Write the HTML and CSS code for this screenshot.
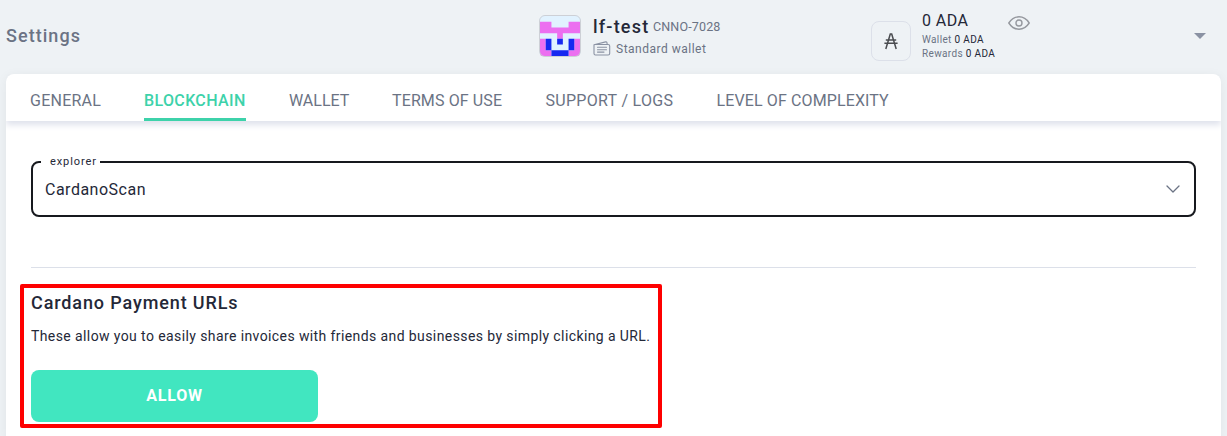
FILE: index.html
```html
<!DOCTYPE html>
<html lang="en">
<head>
<meta charset="utf-8">
<title>Settings</title>
<link rel="stylesheet" href="styles.css">
</head>
<body>
<header class="topbar">
  <h1 class="page-title">Settings</h1>
  <div class="wallet">
    <svg class="avatar" viewBox="0 0 42 42">
      <clipPath id="round"><rect width="42" height="42" rx="6"/></clipPath>
      <g clip-path="url(#round)">
        <rect width="42" height="42" fill="#e1f2ff"/>
        <g transform="translate(1 1) scale(5.714)">
          <path fill="#ec6ff0" d="M0 1h2v1h3V1h2v2H4v1H3V3H0zM0 4h1v2h1v1H0zM6 4h1v3H5V6h1z"/>
          <path fill="#1728f0" d="M1 4h1v2H1zM3 4h1v1H3zM5 4h1v2H5zM2 6h3v1H2z"/>
        </g>
      </g>
      <rect x=".5" y=".5" width="41" height="41" rx="5.5" fill="none" stroke="#cdd0d6"/>
    </svg>
    <div class="wallet-info">
      <div class="wallet-line"><span class="wallet-name">lf-test</span><span class="wallet-plate">CNNO-7028</span></div>
      <div class="wallet-line type-line">
        <svg class="wallet-icon" viewBox="0 0 18 15" fill="none" stroke="#8a92a3" stroke-width="1.1" stroke-linecap="round" stroke-linejoin="round"><path d="M1 3.7 12.6.9q1.2-.2 1.4 1l.2 1.6M2.5 3.5h12.6q1.6 0 1.6 1.5v7.4q0 1.6-1.6 1.6H2.4Q1 14 1 12.5V3.8M4.5 6.3h9M4.5 8.7h9M4.5 11.1h6.5"/></svg>
        <span class="wallet-type">Standard wallet</span>
      </div>
    </div>
  </div>
  <div class="asset">
    <div class="ada-box"><svg width="14" height="17" viewBox="0 0 14 17" fill="none" stroke="#4a4c50" stroke-width="1.5"><path d="M1.8 16 6.3 1h1.4l4.5 15M1.8 7.1h10.4M.4 10.3h13.2"/></svg></div>
    <div class="balances">
      <div class="total">0 ADA</div>
      <div class="detail"><span>Wallet</span> 0 ADA</div>
      <div class="detail"><span>Rewards</span> 0 ADA</div>
    </div>
    <svg class="eye" viewBox="0 0 22 14" fill="none" stroke="#95989e" stroke-width="1.4"><path d="M.8 7Q4.8.8 11 .8T21.2 7Q17.2 13.2 11 13.2T.8 7Z"/><circle cx="11" cy="7" r="3"/></svg>
  </div>
  <svg class="caret" viewBox="0 0 12 6"><path d="M0 0h12L6 6z" fill="#8a92a3"/></svg>
</header>
<main class="panel">
  <nav class="tabs">
    <a class="tab general">GENERAL</a>
    <a class="tab blockchain active">BLOCKCHAIN</a>
    <a class="tab wallet-tab">WALLET</a>
    <a class="tab terms">TERMS OF USE</a>
    <a class="tab support">SUPPORT / LOGS</a>
    <a class="tab complexity">LEVEL OF COMPLEXITY</a>
  </nav>
  <div class="content">
    <fieldset class="select">
      <legend><span class="legend-text">explorer</span></legend>
      <span class="select-value">CardanoScan</span>
      <svg class="chevron" viewBox="0 0 14 8" fill="none" stroke="#6b7384" stroke-width="1.3" stroke-linecap="round" stroke-linejoin="round"><path d="M1 1l6 6 6-6"/></svg>
    </fieldset>
    <hr class="divider">
    <section class="payment">
      <h2 class="section-title">Cardano Payment URLs</h2>
      <p class="description">These allow you to easily share invoices with friends and businesses by simply clicking a URL.</p>
      <button class="allow">ALLOW</button>
    </section>
  </div>
</main>
</body>
</html>
```
FILE: styles.css
```css
* { box-sizing: border-box; }
body { margin: 0; height: 436px; overflow: hidden; background: #eef2f5; font-family: Roboto, "Liberation Sans", sans-serif; color: #242838; }
h1, h2, p { margin: 0; font-weight: 500; }
span, a { white-space: nowrap; }
.topbar { display: flex; height: 74px; padding-left: 6px; align-items: flex-start; }
.page-title { width: 533px; padding-top: 25px; font-size: 18px; line-height: 22px; letter-spacing: 1.05px; color: #6b7384; }
.wallet { display: flex; width: 332px; padding-top: 15px; }
.avatar { width: 42px; height: 42px; margin-right: 12px; }
.wallet-line { display: flex; align-items: center; height: 22px; }
.wallet-name { width: 60px; font-size: 18px; font-weight: 500; letter-spacing: 1.2px; }
.wallet-plate { font-size: 12.5px; letter-spacing: .15px; color: #6b7384; }
.type-line { height: 23px; }
.wallet-icon { width: 18px; height: 15px; margin-right: 5px; }
.wallet-type { font-size: 12px; letter-spacing: .5px; color: #6b7384; }
.asset { display: flex; width: 323px; }
.ada-box { display: grid; place-items: center; width: 40px; height: 40px; margin-top: 21px; border: 1px solid #dce0e9; border-radius: 8px; }
.balances { width: 86px; margin-left: 11px; padding-top: 11px; white-space: nowrap; }
.total { font-size: 16px; line-height: 20px; letter-spacing: .45px; }
.detail { font-size: 10px; line-height: 14px; letter-spacing: .35px; }
.detail:nth-child(2) { padding-top: 2px; height: 16px; }
.detail span { color: #6b7384; }
.eye { width: 22px; height: 14px; margin-top: 16px; }
.caret { width: 12px; height: 6px; margin-top: 33px; }
.panel { margin: 0 6px; height: 370px; border-radius: 8px; background: #fff; box-shadow: 0 2px 12px rgba(0, 0, 0, .06); }
.tabs { display: flex; gap: 43px; height: 47px; padding-left: 24px; border-radius: 8px 8px 0 0; box-shadow: 0 4px 6px #dfe2ec; clip-path: inset(0 0 -14px 0); }
.tab { height: 47px; padding-top: 16px; font-size: 16px; line-height: 21px; color: #6b7384; }
.general { width: 71px; letter-spacing: .25px; }
.blockchain { width: 102px; letter-spacing: .36px; }
.wallet-tab { width: 60px; }
.terms { width: 110.5px; letter-spacing: .12px; }
.support { width: 128px; letter-spacing: .3px; }
.complexity { letter-spacing: .12px; }
.active { border-bottom: 3px solid #3dd2aa; font-weight: 500; color: #3dd2aa; }
.content { padding: 31px 25px 0; }
.select { display: flex; align-items: center; position: relative; width: 1165px; height: 65px; margin: 0; padding: 0 14px 9px 12px; border: 2px solid #17191e; border-radius: 8px; }
.select legend { width: 59px; height: 20px; margin-left: -4px; padding: 1px 0 0 9px; font-size: 11px; line-height: 17px; }
.legend-text { letter-spacing: .9px; }
.select-value { flex: 1; font-size: 16px; letter-spacing: .5px; }
.chevron { width: 14px; height: 8px; margin-top: -1px; }
.divider { height: 1px; margin: 50px 0 16px; border: 0; background: #dce0e9; }
.payment { width: 642px; height: 144px; margin-left: -11.5px; padding: 3px 7.5px; border: 4px solid #fe0000; border-radius: 2px; }
.section-title { font-size: 18px; line-height: 24px; letter-spacing: .88px; }
.description { margin-top: 11px; font-size: 14px; font-weight: 400; line-height: 20px; letter-spacing: .4px; white-space: nowrap; }
.allow { display: block; width: 287px; height: 52px; margin-top: 24px; padding: 0; border: 0; border-radius: 8px; background: #41e6c0; color: #fff; font: 700 16px/20px Roboto, sans-serif; letter-spacing: .75px; }
```
